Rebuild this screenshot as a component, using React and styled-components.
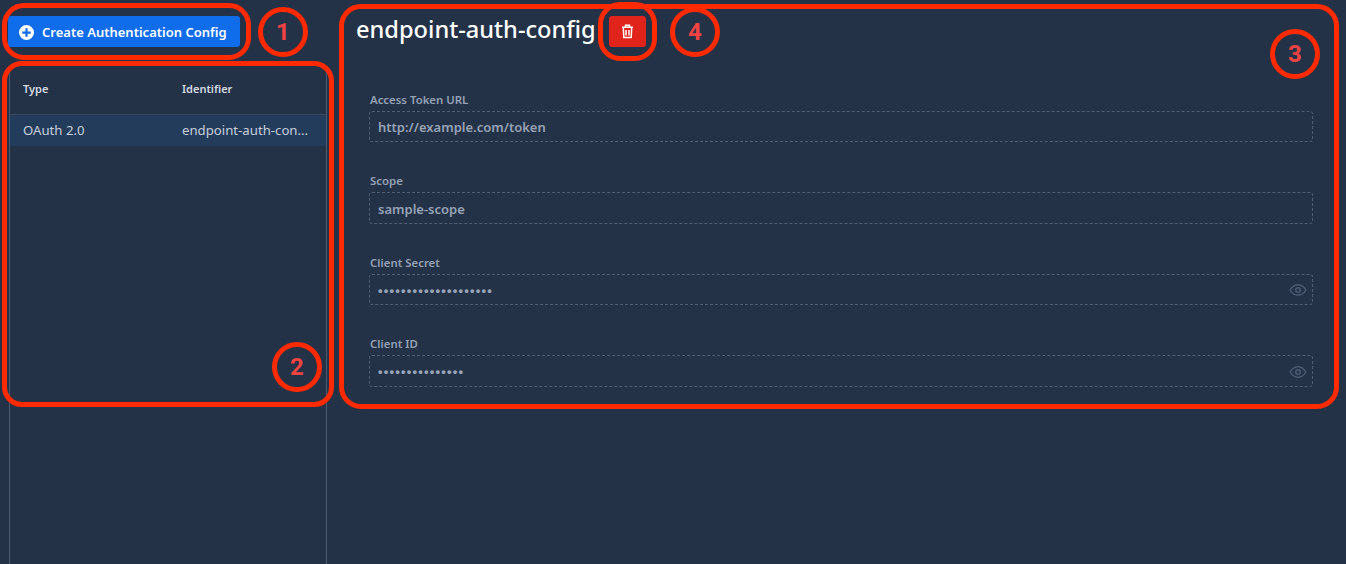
import React from "react";
import styled, { createGlobalStyle } from "styled-components";

const Global = createGlobalStyle`
  html, body { margin: 0; padding: 0; height: 100%; background: #243247; overflow: hidden; }
  #root { height: 100%; }
  * { box-sizing: border-box; }
`;

const Page = styled.div`
  position: relative;
  display: flex;
  height: 564px;
  width: 1346px;
  background: #243247;
  font-family: "Noto Sans", "Open Sans", sans-serif;
  overflow: hidden;
`;
const Sidebar = styled.aside`
  width: 327px;
  flex: none;
  padding: 16px 0 0 9px;
  display: flex;
  flex-direction: column;
`;
const CreateButton = styled.button`
  width: 232px;
  height: 31px;
  margin-left: -1px;
  flex: none;
  display: flex;
  align-items: center;
  gap: 8px;
  padding: 1px 0 0 11px;
  background: #0f6ceb;
  color: #fff;
  border: 0;
  border-radius: 3px;
  font: 600 13px "Noto Sans", sans-serif;
`;
const Table = styled.div`
  margin-top: 19px;
  flex: 1;
  border-left: 1px solid #4a5a70;
  border-right: 1px solid #4a5a70;
`;
const Row = styled.div`
  display: grid;
  grid-template-columns: 159px 1fr;
  padding-left: 13px;
  align-items: center;
  height: ${(p) => (p.$head ? "49px" : "31px")};
  padding-bottom: ${(p) => (p.$head ? "3px" : "2px")};
  background: ${(p) => (p.$head ? "transparent" : "#243c5c")};
  border-bottom: ${(p) => (p.$head ? "1px solid #36475e" : "0")};
  color: ${(p) => (p.$head ? "#d5dbe3" : "#c6cfdb")};
  font-size: ${(p) => (p.$head ? "11px" : "13.2px")};
  font-weight: ${(p) => (p.$head ? 600 : 400)};
`;
const Main = styled.main`
  flex: 1;
  padding: 16px 33px 0 29px;
`;
const TitleRow = styled.div`
  display: flex;
  align-items: flex-start;
  gap: 13px;
  height: 76px;
`;
const Title = styled.h1`
  margin: -2px 0 0;
  font-size: 23.6px;
  line-height: 30px;
  font-weight: 500;
  color: #fff;
`;
const DeleteButton = styled.button`
  width: 37px;
  height: 31px;
  display: flex;
  align-items: center;
  justify-content: center;
  padding: 0;
  background: #e0241c;
  color: #fff;
  border: 0;
  border-radius: 3px;
`;
const Form = styled.div`
  padding-left: 13px;
  display: flex;
  flex-direction: column;
  gap: 32px;
`;
const Field = styled.div`
  display: flex;
  flex-direction: column;
  gap: 4px;
  margin-bottom: -1px;
`;
const Label = styled.label`
  padding-left: 1px;
  font-size: 11.4px;
  line-height: 15px;
  font-weight: 600;
  color: #94a1b5;
`;
const Input = styled.div`
  height: ${(p) => p.$h || 31}px;
  border: 1px dashed #4f5e74;
  border-radius: 3px;
  padding: 1px 8px 0;
  display: flex;
  align-items: center;
  justify-content: space-between;
  color: #97a3b6;
  font-size: 13px;
  font-weight: 600;
`;
const Dots = styled.span`
  font-family: "Liberation Sans", sans-serif;
  font-size: 13px;
  letter-spacing: 1.2px;
  font-weight: 700;
  color: #97a3b6;
`;
const EyeIcon = styled.svg`
  width: 18px;
  height: 18px;
  margin-right: -3px;
  color: #4b5a70;
`;
const Frame = styled.div`
  position: absolute;
  left: ${(p) => p.$x}px;
  top: ${(p) => p.$y}px;
  width: ${(p) => p.$w}px;
  height: ${(p) => p.$h}px;
  border: 5px solid #ff2a00;
  border-radius: ${(p) => p.$r}px;
  pointer-events: none;
`;
const Badge = styled.div`
  position: absolute;
  left: ${(p) => p.$x - 25}px;
  top: ${(p) => p.$y - 25}px;
  width: 50px;
  height: 50px;
  border: 5px solid #ff2a00;
  border-radius: 50%;
  display: flex;
  align-items: center;
  justify-content: center;
  font: 700 24px "Roboto", sans-serif;
  color: #f04343;
`;

const PlusCircle = () => (
  <svg width="15" height="15" viewBox="0 0 16 16">
    <path fill="#fff" fillRule="evenodd" d="M8 0a8 8 0 1 1 0 16A8 8 0 0 1 8 0Zm-1.200 3.500v3.300H3.500v2.400h3.300v3.300h2.400V9.200h3.300V6.800H9.200V3.500H6.800Z" />
  </svg>
);
const Trash = () => (
  <svg width="13" height="15" viewBox="0 0 13 15" fill="none" stroke="#fff" strokeWidth="1.5">
    <path d="M1 3.200h11M4.500 3V1.300h4V3M2.300 3.500l.5 10h7.400l.5-10M5 6v5.500M8 6v5.500" />
  </svg>
);
const Eye = () => (
  <EyeIcon viewBox="0 0 24 24" fill="none" stroke="currentColor" strokeWidth="2">
    <path d="M1.500 12S5.500 5 12 5s10.500 7 10.500 7-4 7-10.500 7S1.500 12 1.500 12Z" />
    <circle cx="12" cy="12" r="3" />
  </EyeIcon>
);

export default function App() {
  return (
    <Page>
      <Global />
      <Sidebar>
        <CreateButton><PlusCircle />Create Authentication Config</CreateButton>
        <Table>
          <Row $head><span>Type</span><span>Identifier</span></Row>
          <Row><span>OAuth 2.0</span><span>endpoint-auth-con...</span></Row>
        </Table>
      </Sidebar>
      <Main>
        <TitleRow>
          <Title>endpoint-auth-config</Title>
          <DeleteButton aria-label="Delete"><Trash /></DeleteButton>
        </TitleRow>
        <Form>
          <Field><Label>Access Token URL</Label><Input>http://example.com/token</Input></Field>
          <Field><Label>Scope</Label><Input $h={32}>sample-scope</Input></Field>
          <Field><Label>Client Secret</Label><Input $h={31}><Dots>••••••••••••••••••••</Dots><Eye /></Input></Field>
          <Field><Label>Client ID</Label><Input $h={32}><Dots>•••••••••••••••</Dots><Eye /></Input></Field>
        </Form>
      </Main>
      <Frame $x={2} $y={3} $w={249} $h={57} $r={22} />
      <Frame $x={2} $y={61} $w={332} $h={346} $r={20} />
      <Frame $x={339} $y={4} $w={1000} $h={405} $r={22} />
      <Frame $x={598} $y={2} $w={59} $h={59} $r={22} />
      <Badge $x={283} $y={32}>1</Badge>
      <Badge $x={297} $y={367}>2</Badge>
      <Badge $x={1295} $y={54}>3</Badge>
      <Badge $x={695} $y={32}>4</Badge>
    </Page>
  );
}
